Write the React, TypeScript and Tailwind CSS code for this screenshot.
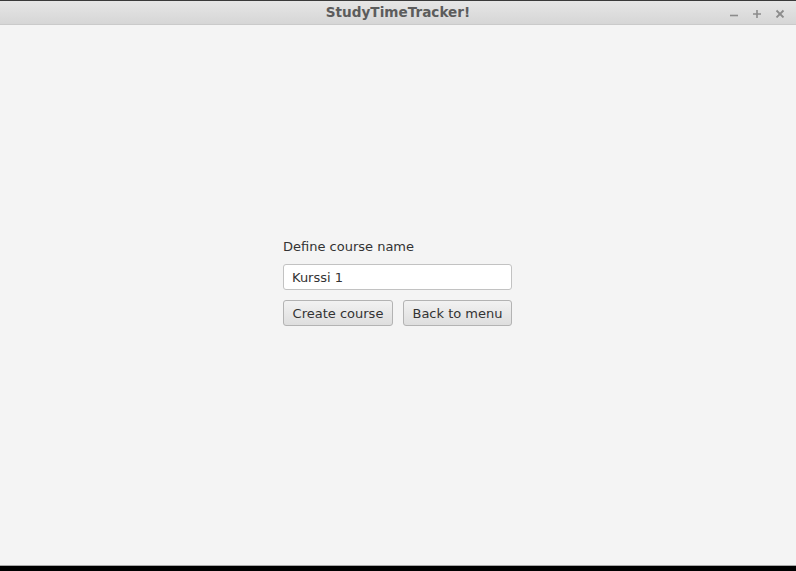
export default function App() {
  return (
    <div
      className="flex h-[571px] w-[796px] flex-col bg-black"
      style={{ fontFamily: '"DejaVu Sans", Verdana, sans-serif' }}
    >
      {/* title bar */}
      <div className="relative flex h-[25px] shrink-0 items-center justify-center border-t border-t-[#3a3a3a] border-b border-b-[#cacaca] bg-gradient-to-b from-[#e6e6e6] to-[#d6d6d6]">
        <span className="text-[13.6px] font-bold leading-none text-[#5c5c5c]">StudyTimeTracker!</span>
        <div className="absolute right-[11px] top-[7px] flex items-center gap-[13px]">
          <svg width="10" height="10" viewBox="0 0 10 10">
            <path d="M1 7.5h8" stroke="#8c8c8c" strokeWidth="1.6" />
          </svg>
          <svg width="10" height="10" viewBox="0 0 10 10">
            <path d="M1 6h8M5 2v8" stroke="#8c8c8c" strokeWidth="1.6" />
          </svg>
          <svg width="10" height="10" viewBox="0 0 10 10">
            <path d="M1.5 2.5l7 7M8.5 2.5l-7 7" stroke="#8c8c8c" strokeWidth="1.8" />
          </svg>
        </div>
      </div>

      {/* content */}
      <div className="flex flex-1 flex-col items-center justify-center bg-[#f4f4f4] pb-[26px]">
        <div className="mr-[1px] flex w-[229px] flex-col">
          <label className="h-[18px] text-[13px] leading-[18px] text-[#333333]">Define course name</label>
          <input
            readOnly
            value="Kurssi 1"
            className="mt-[8px] h-[26px] rounded-[3px] border border-[#c2c2c2] bg-white px-[8px] text-[13px] text-[#333333] outline-none"
          />
          <div className="mt-[10px] flex gap-[10px]">
            <button className="h-[26px] w-[110px] rounded-[3px] border border-[#b3b3b3] bg-gradient-to-b from-[#f2f2f2] to-[#dedede] pt-[1px] text-[13px] text-[#333333]">
              Create course
            </button>
            <button className="h-[26px] w-[109px] rounded-[3px] border border-[#b3b3b3] bg-gradient-to-b from-[#f2f2f2] to-[#dedede] pt-[1px] text-[13px] text-[#333333]">
              Back to menu
            </button>
          </div>
        </div>
      </div>

      {/* bottom edge */}
      <div className="h-[6px] shrink-0 border-t border-t-[#a8a8a8] bg-black" />
    </div>
  )
}
